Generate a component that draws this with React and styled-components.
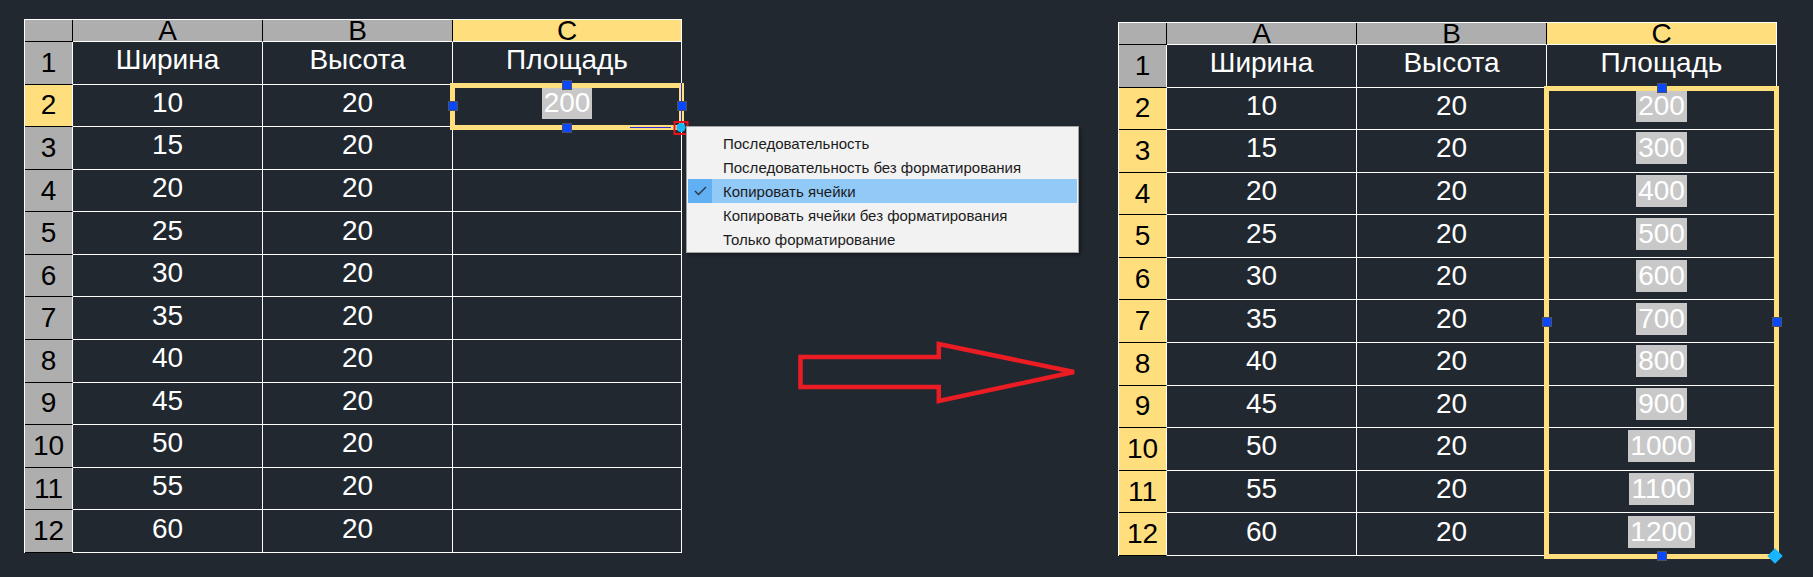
import React from 'react';
import styled, { createGlobalStyle } from 'styled-components';

const GlobalStyle = createGlobalStyle`
  html, body {
    margin: 0;
    padding: 0;
    background: #212830;
  }
  body {
    font-family: 'Liberation Sans', Arial, sans-serif;
  }
`;

const Page = styled.div`
  width: 1813px;
  height: 577px;
  box-sizing: border-box;
  padding: 19px 0 0 24px;
  display: flex;
  align-items: flex-start;
  overflow: hidden;
`;

const SheetWrap = styled.div`
  position: relative;
  margin-top: ${p => p.$top || 0}px;
  margin-left: ${p => p.$left || 0}px;
`;

const Grid = styled.div`
  position: relative;
  display: grid;
  grid-template-columns: 48px 190px 190px ${p => p.$lastCol}px;
  grid-template-rows: 22px repeat(12, 42.58px);
  border-top: 1px solid #fff;
  border-left: 1px solid #fff;
  width: max-content;
`;

const Base = styled.div`
  box-sizing: border-box;
  display: flex;
  align-items: center;
  justify-content: center;
  font-size: 28px;
  white-space: nowrap;
  border-right: 1px solid #fff;
  border-bottom: 1px solid #fff;
`;

const Corner = styled(Base)`
  background: #aeaeae;
  border-right-color: #000;
  border-bottom-color: #000;
`;

const ColHead = styled(Base)`
  background: ${p => (p.$active ? '#ffde7e' : '#aeaeae')};
  color: #000;
  border-right-color: ${p => (p.$last ? '#fff' : '#000')};
`;

const RowHead = styled(Base)`
  background: ${p => (p.$active ? '#ffde7e' : '#aeaeae')};
  color: #000;
  border-bottom-color: #000;
`;

const Cell = styled(Base)`
  color: #fff;
  padding-bottom: 5px;
`;

const Value = styled.span`
  background: #c8c8c8;
  color: #fff;
  padding: 0 2px;
`;

/* selection overlay: an absolutely positioned grid child uses its grid area */
const Frame = styled.div`
  position: absolute;
  grid-column: 4 / 5;
  grid-row: ${p => p.$rows};
  top: -2px;
  right: -2px;
  bottom: -3px;
  left: -3px;
  border: 5px solid #ffde7e;
  pointer-events: none;
  z-index: 2;
`;

const Handle = styled.span`
  position: absolute;
  width: 10px;
  height: 10px;
  box-sizing: border-box;
  background: #0a48ff;
  border: 1px solid #4d5060;
  transform: translate(-50%, -50%);
  left: ${p => (p.$x === 0 ? '-2.5px' : p.$x === 1 ? 'calc(100% + 2.5px)' : '50%')};
  top: ${p => (p.$y === 0 ? '-2.5px' : p.$y === 1 ? 'calc(100% + 2.5px)' : '50%')};
  z-index: 3;
`;

const FillBox = styled.span`
  position: absolute;
  left: calc(100% + 2px);
  top: calc(100% + 2.5px);
  transform: translate(-50%, -50%);
  width: 15px;
  height: 14px;
  box-sizing: border-box;
  border: 2px solid #e8141c;
  display: flex;
  align-items: center;
  justify-content: center;
  z-index: 4;
`;

const FillDot = styled.span`
  width: 9px;
  height: 9px;
  border-radius: 50%;
  background: #1bb4f5;
`;

const Diamond = styled.span`
  position: absolute;
  left: calc(100% + 1px);
  top: calc(100% + 2px);
  width: 11px;
  height: 11px;
  background: #19b5fe;
  transform: translate(-50%, -50%) rotate(45deg);
  z-index: 4;
`;

const GuideH = styled.span`
  position: absolute;
  right: 8px;
  bottom: -3px;
  width: 41px;
  height: 1px;
  background: #2c2cd8;
`;

const GuideV = styled.span`
  position: absolute;
  right: -3px;
  top: -5px;
  width: 1px;
  height: 40px;
  background: #2c2cd8;
`;

const Menu = styled.div`
  position: absolute;
  left: 662px;
  top: 107px;
  width: 393px;
  box-sizing: border-box;
  background: #f2f2f2;
  border: 1px solid #a3a3a3;
  box-shadow: 2px 2px 3px rgba(0, 0, 0, 0.35);
  padding: 4px 1px 1px;
  z-index: 5;
  font-size: 15px;
  color: #1b1b1b;
`;

const MenuItem = styled.div`
  display: flex;
  align-items: center;
  height: 24px;
  background: ${p => (p.$checked ? '#91c9f7' : 'transparent')};
  white-space: nowrap;
`;

const CheckSlot = styled.span`
  width: 24px;
  height: 100%;
  margin-right: 11px;
  display: flex;
  align-items: center;
  justify-content: center;
  background: ${p => (p.$checked ? '#62b0f4' : 'transparent')};
`;

const ArrowBox = styled.svg`
  margin-left: 114px;
  margin-top: 319px;
  flex-shrink: 0;
`;

const widths = [10, 15, 20, 25, 30, 35, 40, 45, 50, 55, 60];

const menuItems = [
  'Последовательность',
  'Последовательность без форматирования',
  'Копировать ячейки',
  'Копировать ячейки без форматирования',
  'Только форматирование',
];

const handleSpots = [
  [0.5, 0],
  [0, 0.5],
  [1, 0.5],
  [0.5, 1],
];

const Sheet = ({ lastCol, filled }) => (
  <Grid $lastCol={lastCol}>
    <Corner />
    <ColHead>A</ColHead>
    <ColHead>B</ColHead>
    <ColHead $active $last>C</ColHead>

    <RowHead>1</RowHead>
    <Cell>Ширина</Cell>
    <Cell>Высота</Cell>
    <Cell>Площадь</Cell>

    {widths.map((w, i) => {
      const showValue = filled || i === 0;
      return (
        <React.Fragment key={w}>
          <RowHead $active={filled || i === 0}>{i + 2}</RowHead>
          <Cell>{w}</Cell>
          <Cell>20</Cell>
          <Cell>{showValue && <Value>{w * 20}</Value>}</Cell>
        </React.Fragment>
      );
    })}

    <Frame $rows={filled ? '3 / 14' : '3 / 4'}>
      {!filled && <GuideV />}
      {!filled && <GuideH />}
      {handleSpots.map(([x, y]) => (
        <Handle key={`${x}-${y}`} $x={x} $y={y} />
      ))}
      {filled ? (
        <Diamond />
      ) : (
        <FillBox>
          <FillDot />
        </FillBox>
      )}
    </Frame>
  </Grid>
);

const App = () => (
  <>
    <GlobalStyle />
    <Page>
      <SheetWrap>
        <Sheet lastCol={229} />
        <Menu>
          {menuItems.map((label, i) => {
            const checked = i === 2;
            return (
              <MenuItem key={label} $checked={checked}>
                <CheckSlot $checked={checked}>
                  {checked && (
                    <svg width="13" height="10" viewBox="0 0 13 10">
                      <polyline points="1,5 4.5,8.5 12,1" fill="none" stroke="#2a3440" strokeWidth="1.4" />
                    </svg>
                  )}
                </CheckSlot>
                {label}
              </MenuItem>
            );
          })}
        </Menu>
      </SheetWrap>

      <ArrowBox width="286" height="68" viewBox="0 0 286 68">
        <polygon
          points="4.5,19 142.8,19 142.8,6 278,34 142.8,63 142.8,49 4.5,49"
          fill="none"
          stroke="#ec1c24"
          strokeWidth="4.5"
        />
      </ArrowBox>

      <SheetWrap $top={3} $left={36}>
        <Sheet lastCol={230} filled />
      </SheetWrap>
    </Page>
  </>
);

export default App;
